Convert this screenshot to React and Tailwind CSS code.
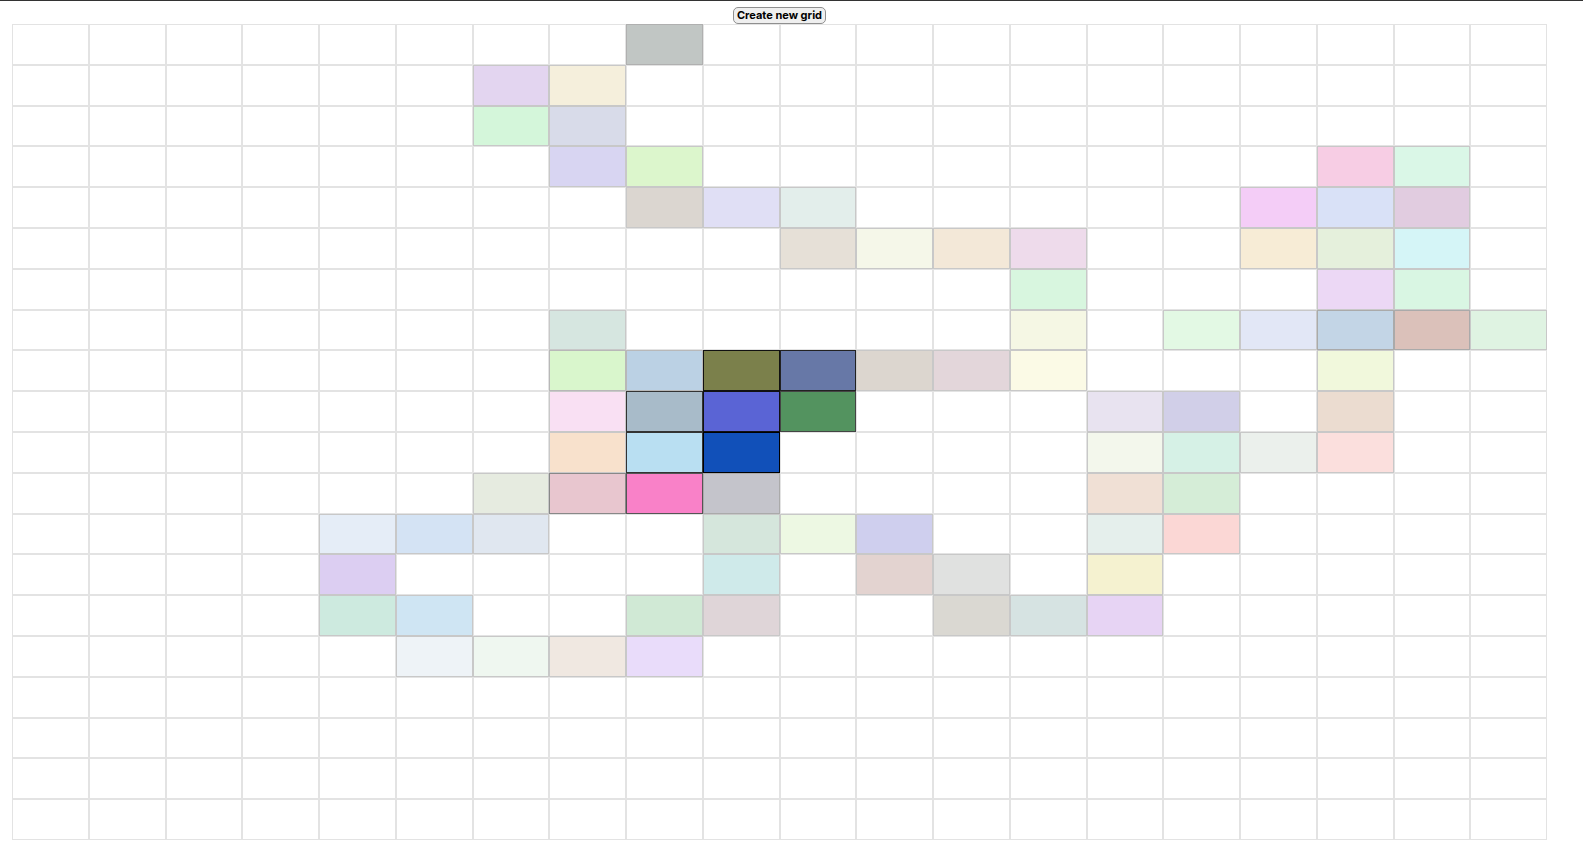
import React from "react";

// painted cells: "row-col" -> classes
const painted = {
  "0-8": "bg-[#c1c6c4] border-[#b0b0b0]",
  "1-6": "bg-[#e3d5f0] border-[#c8c8c8]",
  "1-7": "bg-[#f5efdc] border-[#c8c8c8]",
  "2-6": "bg-[#d4f6da] border-[#c8c8c8]",
  "2-7": "bg-[#d8dbe9] border-[#c8c8c8]",
  "3-7": "bg-[#d8d5f2] border-[#c8c8c8]",
  "3-8": "bg-[#dcf6cc] border-[#c8c8c8]",
  "3-17": "bg-[#f7cde4] border-[#c8c8c8]",
  "3-18": "bg-[#daf7e7] border-[#c8c8c8]",
  "4-8": "bg-[#dbd6d0] border-[#c8c8c8]",
  "4-9": "bg-[#e0dff5] border-[#c8c8c8]",
  "4-10": "bg-[#e3eeeb] border-[#c8c8c8]",
  "4-16": "bg-[#f4cdf7] border-[#c8c8c8]",
  "4-17": "bg-[#d9e1f7] border-[#c8c8c8]",
  "4-18": "bg-[#e1cce0] border-[#c8c8c8]",
  "5-10": "bg-[#e6e0d7] border-[#c8c8c8]",
  "5-11": "bg-[#f5f7e9] border-[#c8c8c8]",
  "5-12": "bg-[#f3e8d8] border-[#c8c8c8]",
  "5-13": "bg-[#eedbeb] border-[#c8c8c8]",
  "5-16": "bg-[#f7ecd6] border-[#c8c8c8]",
  "5-17": "bg-[#e5f0dc] border-[#c8c8c8]",
  "5-18": "bg-[#d5f5f7] border-[#c8c8c8]",
  "6-13": "bg-[#d8f6df] border-[#c8c8c8]",
  "6-17": "bg-[#ecd8f5] border-[#c8c8c8]",
  "6-18": "bg-[#d9f6e3] border-[#c8c8c8]",
  "7-7": "bg-[#d6e6e0] border-[#c8c8c8]",
  "7-13": "bg-[#f5f7e4] border-[#c8c8c8]",
  "7-15": "bg-[#e3f9e4] border-[#c8c8c8]",
  "7-16": "bg-[#e2e7f6] border-[#c8c8c8]",
  "7-17": "bg-[#c3d5e6] border-[#aaaaaa]",
  "7-18": "bg-[#dbc1ba] border-[#aaaaaa]",
  "7-19": "bg-[#dff3e2] border-[#c8c8c8]",
  "8-7": "bg-[#d9f6cc] border-[#b8b8b8]",
  "8-8": "bg-[#bbd1e4] border-[#b8b8b8]",
  "8-9": "bg-[#7b804b] border-[#111111]",
  "8-10": "bg-[#6778a7] border-[#222222]",
  "8-11": "bg-[#dcd6cf] border-[#c8c8c8]",
  "8-12": "bg-[#e3d6da] border-[#c8c8c8]",
  "8-13": "bg-[#fbfae6] border-[#c8c8c8]",
  "8-17": "bg-[#f1f8dc] border-[#c8c8c8]",
  "9-7": "bg-[#f9e0f3] border-[#c8c8c8]",
  "9-8": "bg-[#a8bbc9] border-[#333333]",
  "9-9": "bg-[#5a64d5] border-[#111111]",
  "9-10": "bg-[#53935f] border-[#444444]",
  "9-14": "bg-[#e8e3f0] border-[#c8c8c8]",
  "9-15": "bg-[#d1cfe8] border-[#c8c8c8]",
  "9-17": "bg-[#ebdcd0] border-[#c8c8c8]",
  "10-7": "bg-[#f8e1cc] border-[#c8c8c8]",
  "10-8": "bg-[#b9dff2] border-[#333333]",
  "10-9": "bg-[#1150b9] border-[#000000]",
  "10-14": "bg-[#f3f7ec] border-[#c8c8c8]",
  "10-15": "bg-[#d6f1e6] border-[#c8c8c8]",
  "10-16": "bg-[#ebf0ec] border-[#c8c8c8]",
  "10-17": "bg-[#fbdfdd] border-[#c8c8c8]",
  "11-6": "bg-[#e6ebe0] border-[#c8c8c8]",
  "11-7": "bg-[#e8c6cf] border-[#888888]",
  "11-8": "bg-[#f981c8] border-[#555555]",
  "11-9": "bg-[#c4c4cb] border-[#aaaaaa]",
  "11-14": "bg-[#f0e0d5] border-[#c8c8c8]",
  "11-15": "bg-[#d5edd7] border-[#c8c8c8]",
  "12-4": "bg-[#e5edf7] border-[#c8c8c8]",
  "12-5": "bg-[#d4e3f4] border-[#c8c8c8]",
  "12-6": "bg-[#e0e7f0] border-[#c8c8c8]",
  "12-9": "bg-[#d5e6dc] border-[#c8c8c8]",
  "12-10": "bg-[#edf8e3] border-[#c8c8c8]",
  "12-11": "bg-[#cfcfee] border-[#c8c8c8]",
  "12-14": "bg-[#e5efec] border-[#c8c8c8]",
  "12-15": "bg-[#fbd7d5] border-[#c8c8c8]",
  "13-4": "bg-[#dccef2] border-[#c8c8c8]",
  "13-9": "bg-[#cfeaea] border-[#c8c8c8]",
  "13-11": "bg-[#e3d3d0] border-[#c8c8c8]",
  "13-12": "bg-[#e0e1e0] border-[#c8c8c8]",
  "13-14": "bg-[#f5f2d0] border-[#c8c8c8]",
  "14-4": "bg-[#cdeadf] border-[#c8c8c8]",
  "14-5": "bg-[#cfe5f3] border-[#c8c8c8]",
  "14-8": "bg-[#d0e9d5] border-[#c8c8c8]",
  "14-9": "bg-[#dfd5d8] border-[#c8c8c8]",
  "14-12": "bg-[#dad8d2] border-[#c8c8c8]",
  "14-13": "bg-[#d6e3e2] border-[#c8c8c8]",
  "14-14": "bg-[#e7d4f4] border-[#c8c8c8]",
  "15-5": "bg-[#eef3f7] border-[#c8c8c8]",
  "15-6": "bg-[#eff7f0] border-[#c8c8c8]",
  "15-7": "bg-[#f0e8e1] border-[#c8c8c8]",
  "15-8": "bg-[#e9dcfa] border-[#c8c8c8]",
};

const SIZE = 20;

export default function App() {
  const cells = [];
  for (let r = 0; r < SIZE; r++) {
    for (let c = 0; c < SIZE; c++) {
      const key = `${r}-${c}`;
      cells.push(
        <div key={key} className={`border ${painted[key] || "bg-white border-[#e3e3e3]"}`} />
      );
    }
  }

  return (
    <div className="min-h-screen bg-white border-t border-[#333333]">
      <div className="ml-3 w-[1535px] flex flex-col items-center">
        <button className="mt-[6px] h-[17px] px-[3px] rounded-[5px] border border-[#8f8f8f] bg-[#efefef] text-[11px] leading-none font-bold text-black font-['Inter',sans-serif]">
          Create new grid
        </button>
        <div className="grid grid-cols-[repeat(20,1fr)] grid-rows-[repeat(20,1fr)] w-[1535px] h-[816px]">
          {cells}
        </div>
      </div>
    </div>
  );
}
